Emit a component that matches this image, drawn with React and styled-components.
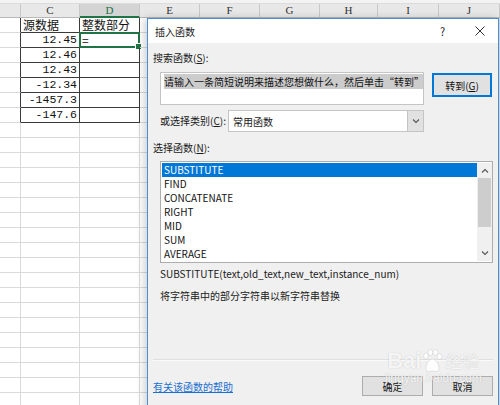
import React from 'react'
import styled, { createGlobalStyle } from 'styled-components'

const Global = createGlobalStyle`
    html, body {
        margin: 0;
        padding: 0;
        width: 500px;
        height: 405px;
        overflow: hidden;
        background: #ffffff;
    }
`

const COLS = [21, 59, 60, 60, 60, 60, 58, 61, 61]
const LETTERS = ['', 'C', 'D', 'E', 'F', 'G', 'H', 'I', 'J']

const DATA = [
    ['源数据', '整数部分'],
    ['12.45', '='],
    ['12.46', ''],
    ['12.43', ''],
    ['-12.34', ''],
    ['-1457.3', ''],
    ['-147.6', ''],
]

const FUNCS = ['SUBSTITUTE', 'FIND', 'CONCATENATE', 'RIGHT', 'MID', 'SUM', 'AVERAGE']

const Page = styled.div`
    position: relative;
    width: 500px;
    height: 405px;
    overflow: hidden;
    background: #ffffff;
`

const Sheet = styled.div`
    display: flex;
    flex-direction: column;
`

const TopStrip = styled.div`
    height: 4px;
    background: #f3f3f3;
    border-bottom: 1px solid #dcdcdc;
    box-sizing: border-box;
`

const HeaderRow = styled.div`
    display: flex;
    height: 14px;
`

const HeaderCell = styled.div`
    width: ${ p => p.$w }px;
    flex: none;
    box-sizing: border-box;
    background: ${ p => p.$active ? '#d4d4d4' : '#e8e8e8' };
    border-right: 1px solid #c8c8c8;
    border-bottom: ${ p => p.$active ? '2px solid #217346' : '1px solid #b8b8b8' };
    color: ${ p => p.$active ? '#217346' : '#333' };
    font: 11px/13px "Liberation Serif", serif;
    text-align: center;
`

const Row = styled.div`
    display: flex;
    height: 15px;
`

const Cell = styled.div`
    position: relative;
    width: ${ p => p.$w }px;
    flex: none;
    box-sizing: border-box;
    border-right: 1px solid ${ p => p.$darkRight ? '#3a3a3a' : '#dadada' };
    border-bottom: 1px solid ${ p => p.$darkBottom ? '#3a3a3a' : '#dadada' };
    padding: 0 2px;
    white-space: nowrap;
    overflow: visible;
    color: #111;
    text-align: ${ p => p.$num ? 'right' : 'left' };
    font: ${ p => p.$num ? '11.5px/14px "Liberation Mono", monospace' : '12px/14px "Noto Sans CJK SC", sans-serif' };
`

const Selection = styled.div`
    position: absolute;
    left: -1px;
    top: -1px;
    right: -1px;
    bottom: -1px;
    border: 2px solid #217346;
    pointer-events: none;

    &::after {
        content: '';
        position: absolute;
        right: -4px;
        bottom: -4px;
        width: 5px;
        height: 5px;
        background: #217346;
        border: 1px solid #fff;
    }
`

const Dialog = styled.div`
    position: absolute;
    left: 147px;
    top: 18px;
    width: 352px;
    height: 400px;
    box-sizing: border-box;
    border: 1px solid #4a8fd6;
    background: #f0f0f0;
    box-shadow: -3px 0 8px rgba(0, 0, 0, 0.18);
    display: flex;
    flex-direction: column;
    font-family: "Noto Sans CJK SC", sans-serif;
    font-size: 10px;
    color: #1a1a1a;
`

const TitleBar = styled.div`
    height: 24px;
    flex: none;
    background: #ffffff;
    display: flex;
    align-items: center;
    padding-left: 7px;
`

const Title = styled.div`
    flex: 1;
    font-size: 10px;
`

const TitleBtn = styled.div`
    width: 37px;
    height: 24px;
    display: flex;
    align-items: center;
    justify-content: center;
    font-size: 11px;
    color: #222;
`

const Body = styled.div`
    flex: 1;
    display: flex;
    flex-direction: column;
    padding: 0 5px 0 5px;
`

const Label = styled.div`
    line-height: 14px;
    margin-top: ${ p => p.$mt }px;
    margin-left: ${ p => p.$ml || 0 }px;
    white-space: nowrap;

    u {
        text-decoration: underline;
        text-underline-offset: 1px;
    }
`

const SearchRow = styled.div`
    display: flex;
    align-items: flex-start;
    margin: 7px 0 0 7px;
    gap: 8px;
`

const SearchBox = styled.div`
    width: 264px;
    height: 33px;
    box-sizing: border-box;
    background: #fff;
    border: 1px solid #c4c4c4;
    padding: 2px 3px;
    line-height: 14px;
    white-space: nowrap;
    overflow: hidden;
`

const Highlight = styled.span`
    background: #cccccc;
    color: #111;
`

const Button = styled.div`
    width: ${ p => p.$w || 61 }px;
    height: ${ p => p.$h || 20 }px;
    margin-top: ${ p => p.$mt || 0 }px;
    box-sizing: border-box;
    background: #e1e1e1;
    border: 1px solid ${ p => p.$focus ? '#0078d7' : '#adadad' };
    box-shadow: ${ p => p.$focus ? 'inset 0 0 0 1px #0078d7' : 'none' };
    display: flex;
    align-items: center;
    justify-content: center;
    color: #111;
`

const CategoryRow = styled.div`
    display: flex;
    align-items: center;
    margin: 5px 0 0 7px;
`

const Select = styled.div`
    width: 196px;
    height: 22px;
    box-sizing: border-box;
    margin-left: auto;
    margin-right: 69px;
    background: #fff;
    border: 1px solid #c4c4c4;
    display: flex;
    align-items: center;
`

const SelectText = styled.div`
    flex: 1;
    padding-left: 4px;
`

const SelectArrow = styled.div`
    width: 15px;
    height: 100%;
    background: #e1e1e1;
    border-left: 1px solid #c4c4c4;
    display: flex;
    align-items: center;
    justify-content: center;
`

const ListBox = styled.div`
    width: 333px;
    height: 102px;
    box-sizing: border-box;
    margin: 6px 0 0 7px;
    background: #fff;
    border: 1px solid #adadad;
    display: flex;
    padding: 1px 0 1px 1px;
`

const Items = styled.div`
    flex: 1;
    display: flex;
    flex-direction: column;
`

const Item = styled.div`
    height: 14px;
    line-height: 14px;
    padding-left: 2px;
    background: ${ p => p.$selected ? '#0078d7' : 'transparent' };
    color: ${ p => p.$selected ? '#fff' : '#111' };
`

const Scrollbar = styled.div`
    width: 15px;
    background: #f0f0f0;
    display: flex;
    flex-direction: column;
    align-items: stretch;
`

const ScrollArrow = styled.div`
    height: 15px;
    display: flex;
    align-items: center;
    justify-content: center;
`

const Thumb = styled.div`
    height: 49px;
    background: #cdcdcd;
    margin: 0 1px;
`

const Separator = styled.div`
    margin-top: 56px;
    height: 1px;
    background: #dfdfdf;
    border-bottom: 1px solid #fafafa;
    margin-right: 0;
`

const Footer = styled.div`
    display: flex;
    align-items: center;
    margin-top: 15px;
    gap: 9px;
`

const HelpLink = styled.div`
    flex: 1;
    color: #1a6fd0;
    text-decoration: underline;
    text-underline-offset: 1px;
`

const Watermark = styled.div`
    position: absolute;
    left: 385px;
    top: 349px;
    display: flex;
    flex-direction: column;
    align-items: center;
    color: rgba(255, 255, 255, 0.85);
    text-shadow: 0 0 1px rgba(120, 120, 120, 0.45);
    pointer-events: none;
`

const Brand = styled.div`
    display: flex;
    align-items: center;
    font: bold 22px/24px "Liberation Sans", sans-serif;

    span {
        font: 17px/20px "Noto Sans CJK SC", sans-serif;
        margin-left: 2px;
    }
`

const Domain = styled.div`
    font: 12px/13px "Liberation Sans", sans-serif;
    margin-top: -1px;
`

const Chevron = ({ up }) => (
    <svg width="8" height="5" viewBox="0 0 8 5">
        <path d={ up ? 'M1 4.5 L4 1.5 L7 4.5' : 'M1 0.5 L4 3.5 L7 0.5' } fill="none" stroke="#555" strokeWidth="1.1" />
    </svg>
)

const Paw = () => (
    <svg width="22" height="24" viewBox="0 0 22 24">
        <g fill="rgba(255,255,255,0.85)" stroke="rgba(140,140,140,0.35)" strokeWidth="0.6">
            <ellipse cx="5" cy="7" rx="2.4" ry="3" />
            <ellipse cx="9.5" cy="3.5" rx="2.4" ry="3" />
            <ellipse cx="14.5" cy="3.5" rx="2.4" ry="3" />
            <ellipse cx="18.5" cy="7.5" rx="2.4" ry="3" />
            <path d="M5 20 C5 13 9 10 11.5 10 C14 10 18 13 18 20 C18 23 14 23 11.5 22 C9 23 5 23 5 20 Z" />
        </g>
    </svg>
)

export default function App() {
    const rowCount = 26
    return (
        <Page>
            <Global />
            <Sheet>
                <TopStrip />
                <HeaderRow>
                    { COLS.map((w, i) => (
                        <HeaderCell key={ i } $w={ w } $active={ i === 2 }>{ LETTERS[i] }</HeaderCell>
                    )) }
                </HeaderRow>
                { Array.from({ length: rowCount }).map((_, r) => {
                    const inBlock = r < DATA.length
                    return (
                        <Row key={ r }>
                            { COLS.map((w, c) => {
                                const boxed = inBlock && (c === 1 || c === 2)
                                const text = inBlock && boxed ? DATA[r][c - 1] : ''
                                return (
                                    <Cell
                                        key={ c }
                                        $w={ w }
                                        $num={ boxed && r > 0 && c === 1 }
                                        $darkRight={ inBlock && c <= 2 }
                                        $darkBottom={ boxed }
                                    >
                                        { text }
                                        { r === 1 && c === 2 && <Selection /> }
                                    </Cell>
                                )
                            }) }
                        </Row>
                    )
                }) }
            </Sheet>

            <Dialog>
                <TitleBar>
                    <Title>插入函数</Title>
                    <TitleBtn>?</TitleBtn>
                    <TitleBtn>
                        <svg width="10" height="10" viewBox="0 0 10 10">
                            <path d="M0.5 0.5 L9.5 9.5 M9.5 0.5 L0.5 9.5" stroke="#333" strokeWidth="1" />
                        </svg>
                    </TitleBtn>
                </TitleBar>
                <Body>
                    <Label $mt={ 8 }>搜索函数(<u>S</u>):</Label>
                    <SearchRow>
                        <SearchBox>
                            <Highlight>请输入一条简短说明来描述您想做什么，然后单击“转到”</Highlight>
                        </SearchBox>
                        <Button $w={ 60 } $h={ 24 } $mt={ 1 } $focus>转到(<u>G</u>)</Button>
                    </SearchRow>
                    <CategoryRow>
                        <Label $mt={ 0 }>或选择类别(<u>C</u>):</Label>
                        <Select>
                            <SelectText>常用函数</SelectText>
                            <SelectArrow><Chevron /></SelectArrow>
                        </Select>
                    </CategoryRow>
                    <Label $mt={ 9 }>选择函数(<u>N</u>):</Label>
                    <ListBox>
                        <Items>
                            { FUNCS.map((f, i) => (
                                <Item key={ f } $selected={ i === 0 }>{ f }</Item>
                            )) }
                        </Items>
                        <Scrollbar>
                            <ScrollArrow><Chevron up /></ScrollArrow>
                            <Thumb />
                            <div style={{ flex: 1 }} />
                            <ScrollArrow><Chevron /></ScrollArrow>
                        </Scrollbar>
                    </ListBox>
                    <Label $mt={ 4 } $ml={ 7 }>SUBSTITUTE(text,old_text,new_text,instance_num)</Label>
                    <Label $mt={ 8 } $ml={ 7 }>将字符串中的部分字符串以新字符串替换</Label>
                    <Separator />
                    <Footer>
                        <HelpLink>有关该函数的帮助</HelpLink>
                        <Button>确定</Button>
                        <Button>取消</Button>
                    </Footer>
                </Body>
            </Dialog>

            <Watermark>
                <Brand>Bai<Paw /><span>经验</span></Brand>
                <Domain>jingyan.baidu.com</Domain>
            </Watermark>
        </Page>
    )
}
